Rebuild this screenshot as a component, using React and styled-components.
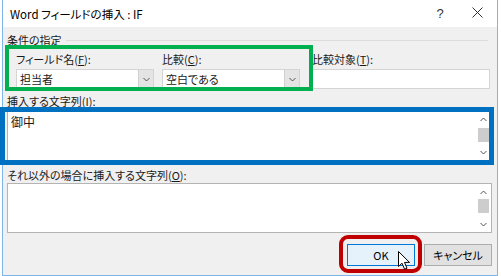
import React from 'react';
import styled, { createGlobalStyle } from 'styled-components';

const GlobalStyle = createGlobalStyle`
  html, body {
    margin: 0;
    padding: 0;
    background: #ffffff;
  }
  body {
    font-family: "Noto Sans CJK JP", "Noto Sans", sans-serif;
    font-size: 11px;
    color: #1a1a1a;
    font-feature-settings: "palt" 1;
  }
`;

const Page = styled.div`
  position: relative;
  width: 501px;
  height: 276px;
  padding-left: 2px;
  box-sizing: border-box;
  overflow: hidden;
`;

const Window = styled.div`
  width: 496px;
  height: 276px;
  box-sizing: border-box;
  border-left: 1px solid #7fb6e8;
  border-right: 1px solid #7fb6e8;
  border-bottom: 1px solid #7fb6e8;
  background: #f0f0f0;
  display: flex;
  flex-direction: column;
`;

const TitleBar = styled.div`
  height: 27px;
  background: #ffffff;
  display: flex;
  align-items: center;
  padding: 0 10px 0 7px;
  font-size: 11.5px;
  color: #000;
`;

const Title = styled.div`
  flex: 1;
`;

const TitleButton = styled.div`
  width: ${p => p.$w}px;
  margin-right: ${p => p.$mr || 0}px;
  text-align: center;
  font-family: "Liberation Sans", sans-serif;
  font-size: ${p => p.$size}px;
  color: #333;
`;

const Body = styled.div`
  flex: 1;
  display: flex;
  flex-direction: column;
  padding: 6px 5px 0 4px;
`;

const GroupHeader = styled.div`
  display: flex;
  align-items: center;
  height: 14px;
  gap: 4px;
`;

const GroupLine = styled.div`
  flex: 1;
  height: 1px;
  background: #dcdcdc;
  margin-right: 4px;
`;

const Label = styled.div`
  height: 14px;
  line-height: 14px;
  white-space: nowrap;
  margin-top: ${p => p.$mt || 0}px;
  u { text-decoration: underline; }
`;

const FieldsRow = styled.div`
  display: flex;
  padding-left: 9px;
  margin-top: 5px;
`;

const Field = styled.div`
  width: ${p => p.$w}px;
  margin-left: ${p => p.$ml || 0}px;
  display: flex;
  flex-direction: column;
`;

const Combo = styled.div`
  margin-top: 3px;
  height: 20px;
  box-sizing: border-box;
  background: #fff;
  border: 1px solid #d4d4d4;
  display: flex;
  align-items: center;
  padding-left: 3px;
`;

const ComboText = styled.div`
  flex: 1;
`;

const DropButton = styled.div`
  width: 14px;
  height: 18px;
  background: #e4e4e4;
  border-left: 1px solid #d0d0d0;
  display: flex;
  align-items: center;
  justify-content: center;
`;

const TextArea = styled.div`
  height: ${p => p.$h}px;
  margin-top: ${p => p.$mt}px;
  box-sizing: border-box;
  background: #fff;
  border: 1px solid #b4b4b4;
  display: flex;
`;

const TextContent = styled.div`
  flex: 1;
  padding: 2px 0 0 3px;
  font-size: 12px;
`;

const ScrollBar = styled.div`
  width: 11px;
  margin: 1px 2px 1px 0;
  display: flex;
  flex-direction: column;
  align-items: center;
`;

const ScrollArrow = styled.div`
  height: 14px;
  display: flex;
  align-items: center;
  justify-content: center;
`;

const ScrollThumb = styled.div`
  width: 11px;
  height: 14px;
  background: #cdcdcd;
`;

const ScrollTrack = styled.div`
  flex: 1;
`;

const ButtonRow = styled.div`
  display: flex;
  justify-content: flex-end;
  gap: 9px;
  margin-top: 11px;
`;

const Button = styled.div`
  width: 68px;
  height: 22px;
  box-sizing: border-box;
  display: flex;
  align-items: center;
  justify-content: center;
  font-size: 11px;
  color: #000;
  background: ${p => (p.$primary ? '#e5f1fb' : '#e1e1e1')};
  border: 1px solid ${p => (p.$primary ? '#0078d7' : '#adadad')};
`;

const Highlight = styled.div`
  position: absolute;
  left: ${p => p.$x}px;
  top: ${p => p.$y}px;
  width: ${p => p.$w}px;
  height: ${p => p.$h}px;
  box-sizing: border-box;
  border: ${p => p.$t}px solid ${p => p.$color};
  border-radius: ${p => p.$r || 0}px;
  pointer-events: none;
`;

const Cursor = styled.svg`
  position: absolute;
  left: 398px;
  top: 251px;
`;

const Chevron = ({ dir = 'down' }) => (
  <svg width="7" height="5" viewBox="0 0 7 5">
    <path
      d={dir === 'down' ? 'M0.5 1 L3.5 4 L6.5 1' : 'M0.5 4 L3.5 1 L6.5 4'}
      fill="none"
      stroke="#555"
      strokeWidth="1"
    />
  </svg>
);

const CloseIcon = () => (
  <svg width="11" height="11" viewBox="0 0 11 11">
    <path d="M0.5 0.5 L10.5 10.5 M10.5 0.5 L0.5 10.5" stroke="#333" strokeWidth="1" />
  </svg>
);

const VScroll = ({ thumbTop }) => (
  <ScrollBar>
    <ScrollArrow><Chevron dir="up" /></ScrollArrow>
    <ScrollThumb style={{ marginTop: thumbTop }} />
    <ScrollTrack />
    <ScrollArrow><Chevron dir="down" /></ScrollArrow>
  </ScrollBar>
);

export default function App() {
  return (
    <Page>
      <GlobalStyle />
      <Window>
        <TitleBar>
          <Title>Word フィールドの挿入 : IF</Title>
          <TitleButton $w={14} $size={13} $mr={20}>?</TitleButton>
          <TitleButton $w={20} $size={13}><CloseIcon /></TitleButton>
        </TitleBar>
        <Body>
          <GroupHeader>
            <span>条件の指定</span>
            <GroupLine />
          </GroupHeader>
          <FieldsRow>
            <Field $w={138}>
              <Label>フィールド名(<u>F</u>):</Label>
              <Combo>
                <ComboText>担当者</ComboText>
                <DropButton><Chevron /></DropButton>
              </Combo>
            </Field>
            <Field $w={138} $ml={8}>
              <Label>比較(<u>C</u>):</Label>
              <Combo>
                <ComboText>空白である</ComboText>
                <DropButton><Chevron /></DropButton>
              </Combo>
            </Field>
            <Field $w={178} $ml={12}>
              <Label>比較対象(<u>T</u>):</Label>
              <Combo />
            </Field>
          </FieldsRow>
          <Label $mt={5}>挿入する文字列(<u>I</u>):</Label>
          <TextArea $h={51} $mt={2}>
            <TextContent>御中</TextContent>
            <VScroll thumbTop={2} />
          </TextArea>
          <Label $mt={7}>それ以外の場合に挿入する文字列(<u>O</u>):</Label>
          <TextArea $h={50} $mt={1}>
            <TextContent />
            <VScroll thumbTop={0} />
          </TextArea>
          <ButtonRow>
            <Button $primary>OK</Button>
            <Button>キャンセル</Button>
          </ButtonRow>
        </Body>
      </Window>
      <Highlight $x={5} $y={45} $w={308} $h={46} $t={4} $color="#00b050" />
      <Highlight $x={0} $y={107} $w={494} $h={58} $t={5} $color="#0070c0" />
      <Highlight $x={339} $y={235} $w={83} $h={38} $t={4} $r={9} $color="#c00000" />
      <Cursor width="13" height="19" viewBox="0 0 13 19">
        <path
          d="M0.5 0.5 L0.5 15.5 L4 12.2 L6.6 18.2 L9 17.2 L6.5 11.4 L11.5 11.4 Z"
          fill="#ffffff"
          stroke="#000"
          strokeWidth="1"
          strokeLinejoin="round"
        />
      </Cursor>
    </Page>
  );
}
